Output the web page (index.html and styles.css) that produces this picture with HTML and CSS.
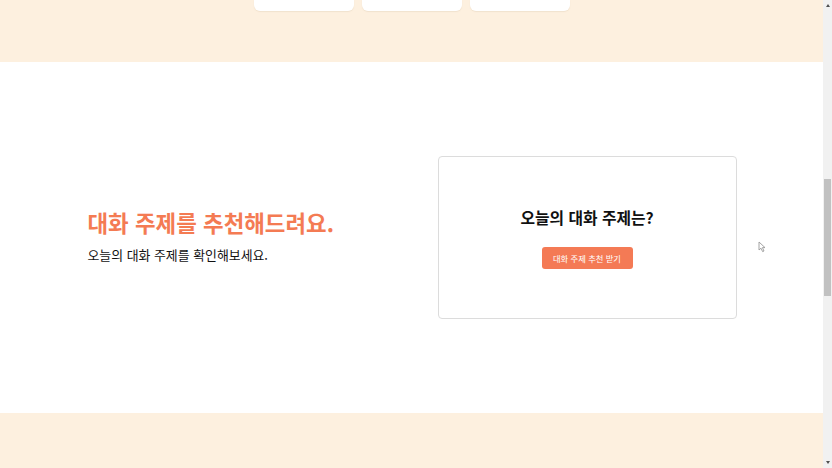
FILE: index.html
```html
<!DOCTYPE html>
<html lang="ko">
<head>
<meta charset="utf-8">
<title>대화 주제 추천</title>
<link rel="stylesheet" href="styles.css">
</head>
<body>
<div class="window">
  <main class="page">
    <section class="band band-top">
      <div class="mini-card"></div>
      <div class="mini-card"></div>
      <div class="mini-card"></div>
    </section>
    <section class="topic">
      <div class="topic-inner">
        <div class="topic-text">
          <h2 class="topic-title">대화 주제를 추천해드려요.</h2>
          <p class="topic-desc">오늘의 대화 주제를 확인해보세요.</p>
        </div>
        <div class="topic-card">
          <h3 class="card-title">오늘의 대화 주제는?</h3>
          <button class="card-btn" type="button">대화 주제 추천 받기</button>
        </div>
      </div>
      <svg class="cursor" width="10" height="12" viewBox="0 0 10 12" aria-hidden="true">
        <path d="M1 1 L1 9 L3 7.2 L4.6 10.6 L6 10 L4.4 6.6 L7 6.6 Z" fill="#fff" stroke="#9a9a9a" stroke-width="0.9" stroke-linejoin="round"/>
      </svg>
    </section>
    <section class="band band-bottom"></section>
  </main>
  <div class="scrollbar">
    <span class="arrow arrow-up"></span>
    <div class="track">
      <div class="thumb"></div>
    </div>
    <span class="arrow arrow-down"></span>
  </div>
</div>
</body>
</html>
```
FILE: styles.css
```css
* { box-sizing: border-box; }
html, body { margin: 0; padding: 0; }
body {
  width: 832px;
  height: 468px;
  overflow: hidden;
  font-family: "Noto Sans CJK KR", "Noto Sans", sans-serif;
  background: #fff;
}
.window {
  display: flex;
  height: 468px;
}
.page {
  width: 823px;
  display: flex;
  flex-direction: column;
}
.band {
  background: #fdf0df;
}
.band-top {
  height: 62px;
  display: flex;
  justify-content: center;
  gap: 8px;
  padding-left: 1px;
}
.mini-card {
  width: 100px;
  height: 11px;
  background: #fff;
  border-radius: 0 0 6px 6px;
  box-shadow: 0 1px 1px rgba(220, 200, 175, 0.35);
}
.topic {
  position: relative;
  height: 351px;
  background: #fff;
  display: flex;
  align-items: center;
}
.topic-inner {
  width: 650px;
  margin: 0 auto;
  display: flex;
  align-items: center;
  justify-content: space-between;
  padding-left: 1px;
}
.topic-text {
  padding-bottom: 4px;
}
.topic-title {
  margin: 0;
  font-size: 22.4px;
  line-height: 30px;
  font-weight: 700;
  color: #f47b53;
}
.topic-desc {
  margin: 9px 0 0;
  font-size: 12.9px;
  line-height: 18px;
  color: #111;
}
.topic-card {
  width: 299px;
  height: 163px;
  border: 1px solid #dcdcdc;
  border-radius: 4px;
  display: flex;
  flex-direction: column;
  align-items: center;
  justify-content: center;
  padding-top: 2px;
}
.card-title {
  margin: 0 0 19px;
  font-size: 15.8px;
  line-height: 20px;
  font-weight: 700;
  color: #111;
}
.card-btn {
  width: 91px;
  height: 22px;
  border: 0;
  border-radius: 3px;
  background: #f47a55;
  color: #fff;
  font-family: inherit;
  font-size: 8.3px;
  line-height: 22px;
  padding: 0;
}
.cursor {
  position: absolute;
  left: 758px;
  top: 179px;
}
.band-bottom {
  flex: 1;
}
.scrollbar {
  width: 9px;
  background: #f1f1f1;
  display: flex;
  flex-direction: column;
  align-items: center;
}
.arrow {
  width: 0;
  height: 0;
  border-left: 2.5px solid transparent;
  border-right: 2.5px solid transparent;
}
.arrow-up {
  margin-top: 4px;
  border-bottom: 3px solid #505050;
}
.arrow-down {
  margin-bottom: 4px;
  border-top: 3px solid #505050;
}
.track {
  flex: 1;
  width: 100%;
  padding-top: 172px;
}
.thumb {
  width: 7px;
  height: 117px;
  margin-left: 1px;
  background: #c1c1c1;
}
```
